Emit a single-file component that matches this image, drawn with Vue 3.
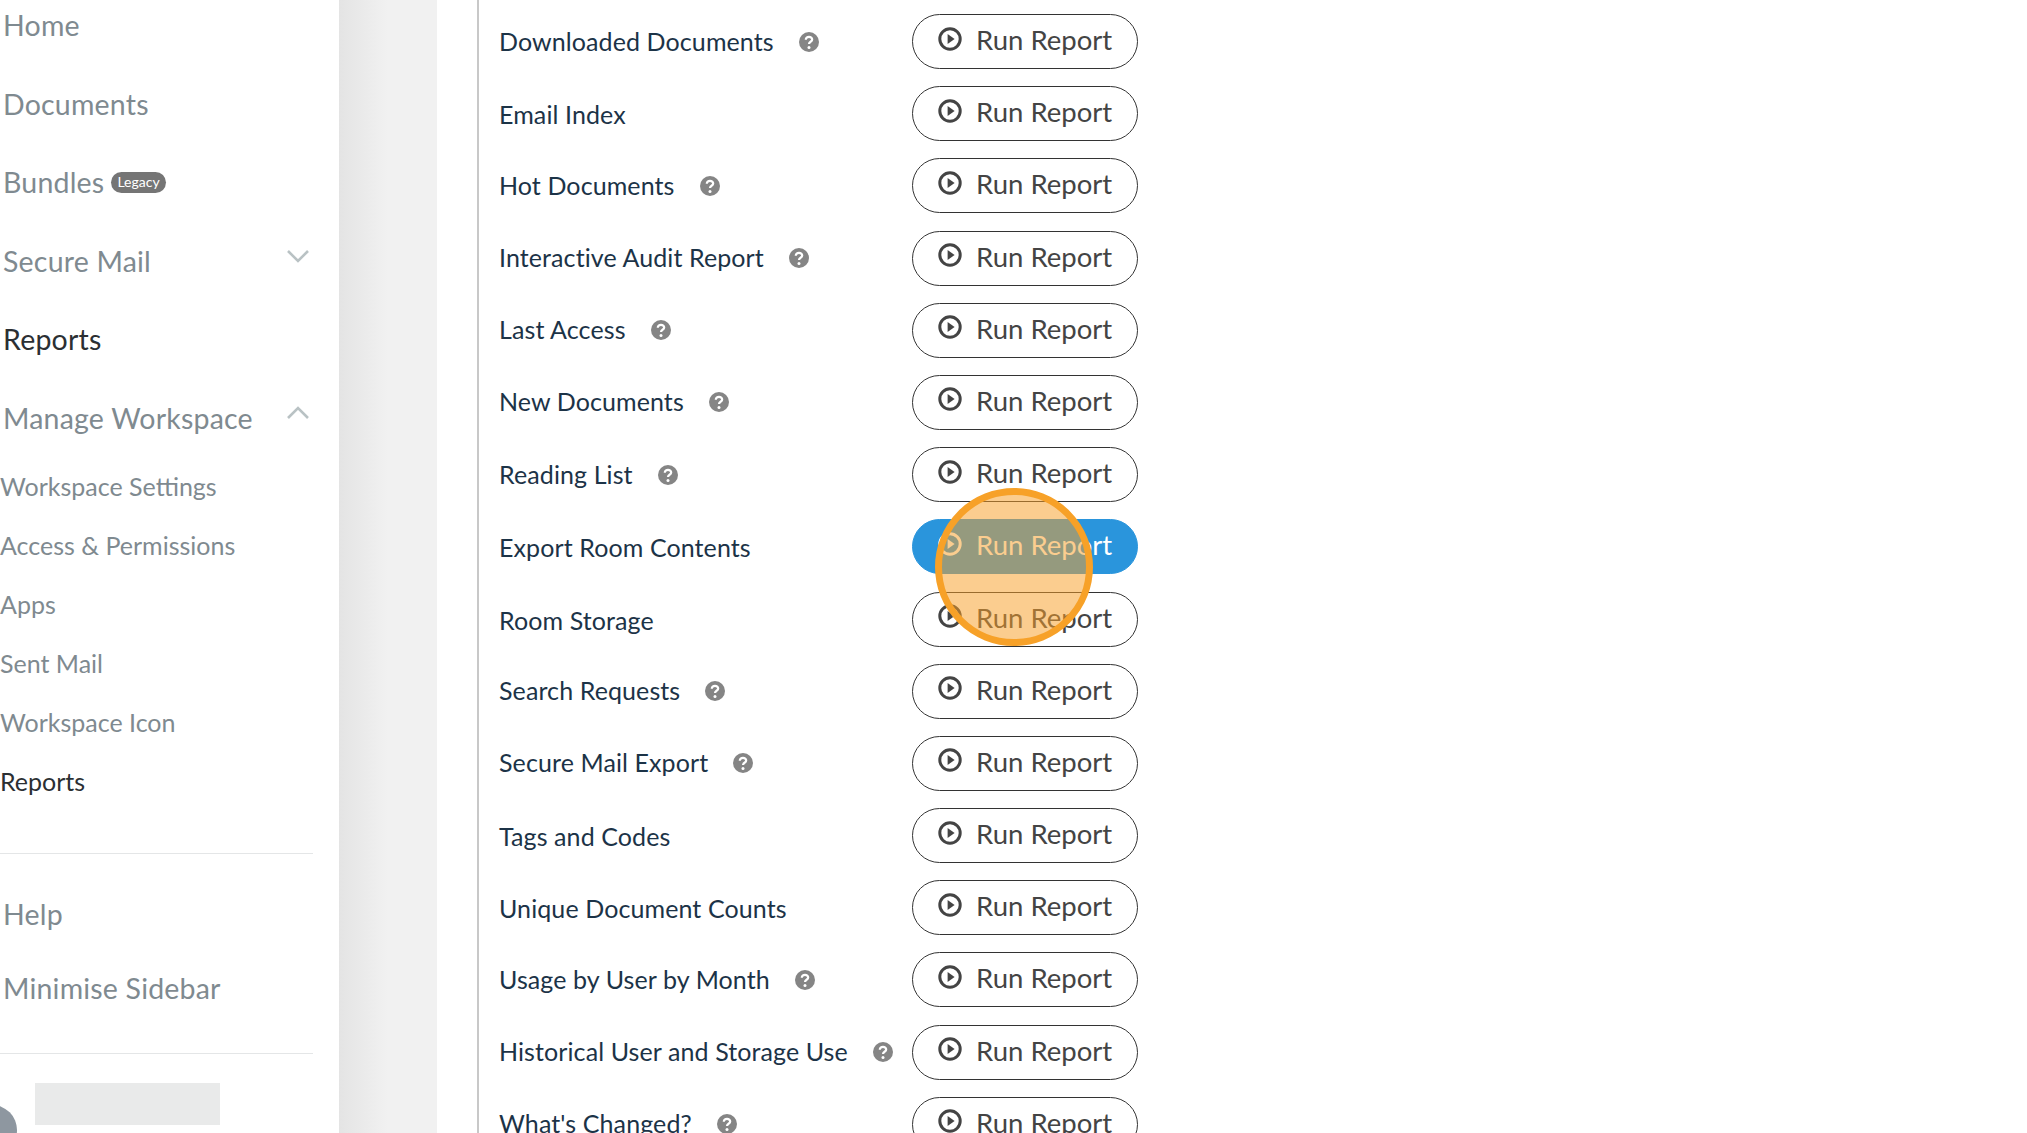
<script setup>
const mainNav = [
  { label: 'Home' },
  { label: 'Documents' },
  { label: 'Bundles', badge: 'Legacy' },
  { label: 'Secure Mail', chevron: 'down' },
  { label: 'Reports', active: true },
  { label: 'Manage Workspace', chevron: 'up' }
]

const subNav = [
  { label: 'Workspace Settings' },
  { label: 'Access & Permissions' },
  { label: 'Apps' },
  { label: 'Sent Mail' },
  { label: 'Workspace Icon' },
  { label: 'Reports', active: true }
]

const reports = [
  { name: 'Downloaded Documents', help: true },
  { name: 'Email Index' },
  { name: 'Hot Documents', help: true },
  { name: 'Interactive Audit Report', help: true },
  { name: 'Last Access', help: true },
  { name: 'New Documents', help: true },
  { name: 'Reading List', help: true },
  { name: 'Export Room Contents', hover: true },
  { name: 'Room Storage' },
  { name: 'Search Requests', help: true },
  { name: 'Secure Mail Export', help: true },
  { name: 'Tags and Codes' },
  { name: 'Unique Document Counts' },
  { name: 'Usage by User by Month', help: true },
  { name: 'Historical User and Storage Use', help: true },
  { name: "What's Changed?", help: true }
]
</script>

<template>
  <div class="page">
    <aside class="sidebar">
      <nav class="main-nav">
        <div
          v-for="item in mainNav"
          :key="item.label"
          class="main-item"
          :class="{ active: item.active }"
        >
          <span>{{ item.label }}</span>
          <span v-if="item.badge" class="badge">{{ item.badge }}</span>
          <svg v-if="item.chevron" class="chevron" viewBox="0 0 24 14" width="24" height="14">
            <path
              :d="item.chevron === 'down' ? 'M2 2l10 10L22 2' : 'M2 12L12 2l10 10'"
              fill="none"
              stroke="#b9c2c4"
              stroke-width="2.6"
            />
          </svg>
        </div>
      </nav>
      <nav class="sub-nav">
        <div
          v-for="item in subNav"
          :key="item.label"
          class="sub-item"
          :class="{ active: item.active }"
        >
          {{ item.label }}
        </div>
      </nav>
      <div class="divider"></div>
      <nav class="bottom-nav">
        <div class="main-item">Help</div>
        <div class="main-item">Minimise Sidebar</div>
      </nav>
      <div class="divider second"></div>
      <div class="user">
        <div class="avatar"></div>
        <div class="user-name"></div>
      </div>
    </aside>
    <div class="gutter"></div>
    <main class="content">
      <div class="report-list">
        <div v-for="report in reports" :key="report.name" class="report-row">
          <div class="report-name" :class="{ plain: !report.help }">
            <span>{{ report.name }}</span>
            <svg v-if="report.help" class="help" viewBox="0 0 20 20" width="20" height="20">
              <circle cx="10" cy="10" r="10" fill="#858585" />
              <path
                d="M6.8 7.8c0-1.9 1.4-3 3.2-3s3.2 1.1 3.2 2.7c0 2.3-3.2 2.2-3.2 4.4"
                fill="none"
                stroke="#fff"
                stroke-width="2.2"
              />
              <circle cx="10" cy="15.4" r="1.5" fill="#fff" />
            </svg>
          </div>
          <button class="run-btn" :class="{ hover: report.hover }">
            <svg class="play" viewBox="0 0 24 24" width="24" height="24">
              <circle cx="12" cy="12" r="10.2" fill="none" stroke="currentColor" stroke-width="3" />
              <path d="M9.6 7l7 5-7 5z" fill="currentColor" />
            </svg>
            <span>Run Report</span>
          </button>
        </div>
      </div>
      <div class="click-marker"></div>
    </main>
  </div>
</template>

<style>
html,
body {
  margin: 0;
  background: #fff;
}
</style>

<style scoped>
.page {
  display: flex;
  width: 2027px;
  height: 1133px;
  overflow: hidden;
  background: #fff;
  font-family: Lato, "Open Sans", sans-serif;
}

.sidebar {
  width: 339px;
  flex: none;
  display: flex;
  flex-direction: column;
  background: #fff;
}

.main-nav {
  margin-top: -14px;
}

.main-item {
  position: relative;
  display: flex;
  align-items: center;
  height: 78.5px;
  padding-left: 3px;
  font-size: 28.5px;
  letter-spacing: 0.2px;
  color: #7f8a90;
}

.main-item.active {
  color: #2b2f33;
}

.badge {
  margin-left: 7px;
  padding: 0 6px;
  height: 21px;
  line-height: 20px;
  border-radius: 11px;
  background: #757575;
  color: #fff;
  font-size: 14px;
  letter-spacing: 0;
}

.chevron {
  position: absolute;
  right: 29px;
  top: 27px;
}

.sub-nav {
  margin-top: 0;
}

.sub-item {
  height: 59px;
  line-height: 59px;
  font-size: 25px;
  color: #7f8a90;
}

.sub-item.active {
  color: #2b2f33;
}

.divider {
  width: 313px;
  height: 1px;
  margin-top: 42px;
  background: #e4e6e7;
}

.divider.second {
  margin-top: 28px;
}

.bottom-nav {
  margin-top: 23px;
}

.bottom-nav .main-item {
  height: 74px;
}

.user {
  display: flex;
  align-items: flex-start;
  margin-top: 29px;
  padding-left: 35px;
  position: relative;
}

.user-name {
  width: 185px;
  height: 42px;
  background: #e9eaea;
}

.avatar {
  position: absolute;
  left: -33px;
  top: 22px;
  width: 50px;
  height: 50px;
  border-radius: 50%;
  background: #8e97a0;
}

.gutter {
  width: 98px;
  flex: none;
  background: linear-gradient(to right, #e4e4e4, #f1f1f1 50%);
}

.content {
  position: relative;
  flex: 1;
  padding-left: 40px;
}

.report-list {
  border-left: 2px solid #c8c8c8;
  padding-left: 20px;
  padding-top: 14px;
  height: 1133px;
  box-sizing: border-box;
}

.report-row {
  display: flex;
  align-items: center;
  height: 55px;
  margin-bottom: 17.2px;
}

.report-name {
  width: 413px;
  display: flex;
  align-items: center;
  gap: 25px;
  margin-top: -2px;
  font-size: 25px;
  letter-spacing: 0.1px;
  color: #1c3347;
  white-space: nowrap;
}

.report-name.plain {
  padding-top: 3px;
}

.help {
  flex: none;
  margin-top: 2px;
}

.run-btn {
  width: 226px;
  height: 55px;
  box-sizing: border-box;
  display: flex;
  align-items: center;
  gap: 14px;
  padding: 0 0 0 25px;
  border: 1px solid #333;
  border-radius: 28px;
  background: #fff;
  color: #444;
  font-family: inherit;
  font-size: 27.5px;
}

.run-btn span {
  margin-top: -4px;
}

.play {
  margin-top: -6px;
  flex: none;
}

.run-btn.hover {
  background: #2a95dc;
  border-color: #2a95dc;
  color: #fff;
}

.click-marker {
  position: absolute;
  left: 498px;
  top: 488px;
  width: 158px;
  height: 158px;
  box-sizing: border-box;
  border: 7px solid #f7a128;
  border-radius: 50%;
  background: rgba(247, 160, 40, 0.52);
}
</style>
